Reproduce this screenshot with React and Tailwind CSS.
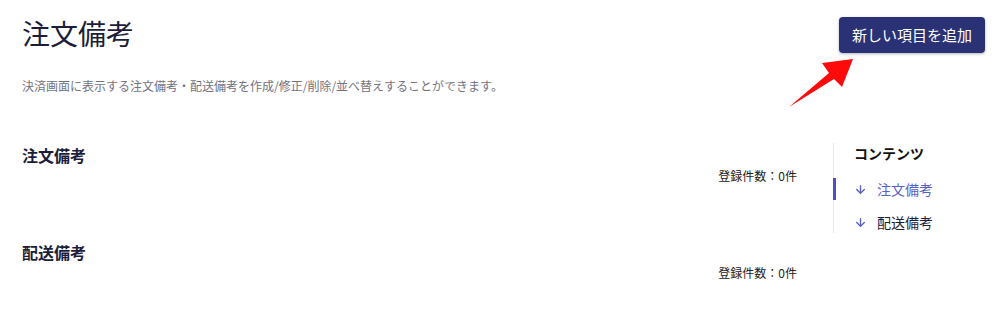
import React from 'react';
import { ArrowDown } from 'lucide-react';

const sections = [
  { id: 'order', title: '注文備考', count: 0 },
  { id: 'delivery', title: '配送備考', count: 0 },
];

const App = () => {
  return (
    <div className="relative min-h-[312px] bg-white text-[#1b1d3a] font-['Noto_Sans_CJK_JP','Noto_Sans',sans-serif]">
      {/* Header */}
      <div className="flex justify-between items-start pl-[22px] pr-[10px] pt-[15px]">
        <div>
          <h1 className="text-[28px] leading-[36px] font-normal">注文備考</h1>
          <p className="mt-[26px] text-[12px] leading-[18px] text-[#73737f]">
            決済画面に表示する注文備考・配送備考を作成/修正/削除/並べ替えすることができます。
          </p>
        </div>
        <button className="mt-[2px] h-[36px] px-[13px] rounded-[4px] bg-[#2a3275] text-white text-[15px] leading-[20px] shadow-[0_1px_3px_rgba(0,0,0,0.3)]">
          新しい項目を追加
        </button>
      </div>

      {/* Body */}
      <div className="flex mt-[48px] pl-[22px]">
        <div className="flex-1 pr-[36px]">
          {sections.map((s, i) => (
            <div key={s.id} className={i > 0 ? 'mt-[55px]' : ''}>
              <h2 className="text-[16px] leading-[24px] font-bold">{s.title}</h2>
              <div className="text-right text-[12px] leading-[18px] text-[#222]">
                登録件数：{s.count}件
              </div>
            </div>
          ))}
        </div>

        <aside className="w-[162px] border-l border-[#e4e4ea] self-start">
          <div className="pl-[20px] text-[14px] leading-[20px] font-bold text-[#111]">コンテンツ</div>
          {sections.map((s, i) => (
            <div
              key={s.id}
              className={`ml-[-1px] border-l-[3px] pl-[18px] h-[22px] flex items-center gap-[10px] text-[14px] ${
                i === 0
                  ? 'mt-[15px] border-[#4b53bf] text-[#5a60c8]'
                  : 'mt-[11px] border-transparent text-[#1b1d3a]'
              }`}
            >
              <ArrowDown className="w-[13px] h-[13px] text-[#5a60c8]" strokeWidth={2.5} />
              <span>{s.title}</span>
            </div>
          ))}
        </aside>
      </div>

      {/* Annotation arrow */}
      <svg
        className="absolute inset-0 pointer-events-none"
        width="995"
        height="312"
        viewBox="0 0 995 312"
      >
        <polygon
          points="789,107 829,73 822,63 853,59 842,87 834,79"
          fill="#ff0a0a"
        />
      </svg>
    </div>
  );
};

export default App;
